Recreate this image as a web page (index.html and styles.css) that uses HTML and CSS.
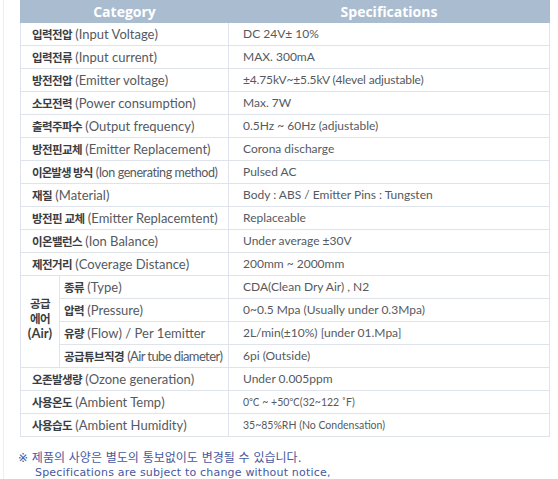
FILE: index.html
```html
<!DOCTYPE html>
<html lang="ko">
<head>
<meta charset="utf-8">
<title>Specifications</title>
<link rel="stylesheet" href="styles.css">
</head>
<body>
<div class="page">
  <table class="spec">
    <colgroup>
      <col class="c-air">
      <col class="c-cat">
      <col class="c-val">
    </colgroup>
    <thead>
      <tr><th colspan="2">Category</th><th>Specifications</th></tr>
    </thead>
    <tbody>
      <tr><td colspan="2" class="cat"><b>입력전압</b> (Input Voltage)</td><td class="val">DC 24V± 10%</td></tr>
      <tr><td colspan="2" class="cat"><b>입력전류</b> (Input current)</td><td class="val">MAX. 300mA</td></tr>
      <tr><td colspan="2" class="cat"><b>방전전압</b> (Emitter voltage)</td><td class="val narrow">±4.75kV~±5.5kV (4level adjustable)</td></tr>
      <tr><td colspan="2" class="cat"><b>소모전력</b> (Power consumption)</td><td class="val">Max. 7W</td></tr>
      <tr><td colspan="2" class="cat"><b>출력주파수</b> (Output frequency)</td><td class="val">0.5Hz ~ 60Hz (adjustable)</td></tr>
      <tr><td colspan="2" class="cat"><b>방전핀교체</b> (Emitter Replacement)</td><td class="val">Corona discharge</td></tr>
      <tr><td colspan="2" class="cat"><b class="bt">이온발생 방식</b> <span class="tighter">(Ion generating method)</span></td><td class="val">Pulsed AC</td></tr>
      <tr><td colspan="2" class="cat"><b>재질</b> (Material)</td><td class="val">Body : ABS / Emitter Pins : Tungsten</td></tr>
      <tr><td colspan="2" class="cat"><b>방전핀 교체</b> (Emitter Replacemtent)</td><td class="val">Replaceable</td></tr>
      <tr><td colspan="2" class="cat"><b>이온밸런스</b> (Ion Balance)</td><td class="val">Under average ±30V</td></tr>
      <tr><td colspan="2" class="cat"><b>제전거리</b> (Coverage Distance)</td><td class="val">200mm ~ 2000mm</td></tr>
      <tr><td rowspan="4" class="air"><b>공급<br>에어</b><br><span class="air-en">(Air)</span></td><td class="cat sub"><b>종류</b> (Type)</td><td class="val">CDA(Clean Dry Air) , N2</td></tr>
      <tr><td class="cat sub"><b>압력</b> (Pressure)</td><td class="val">0~0.5 Mpa (Usually under 0.3Mpa)</td></tr>
      <tr><td class="cat sub"><b>유량</b> (Flow) / Per 1emitter</td><td class="val">2L/min(±10%) [under 01.Mpa]</td></tr>
      <tr><td class="cat sub"><b>공급튜브직경</b> <span class="tight">(Air tube diameter)</span></td><td class="val">6pi (Outside)</td></tr>
      <tr><td colspan="2" class="cat"><b>오존발생량</b> (Ozone generation)</td><td class="val">Under 0.005ppm</td></tr>
      <tr><td colspan="2" class="cat"><b>사용온도</b> (Ambient Temp)</td><td class="val small">0℃ ~ +50℃(32~122 ˚F)</td></tr>
      <tr><td colspan="2" class="cat"><b>사용습도</b> (Ambient Humidity)</td><td class="val small">35~85%RH (No Condensation)</td></tr>
    </tbody>
  </table>
  <p class="note"><span class="ko">※ 제품의 사양은 별도의 통보없이도 변경될 수 있습니다.</span><br><span class="en">Specifications are subject to change without notice,</span></p>
</div>
</body>
</html>
```
FILE: styles.css
```css
html, body {
  margin: 0;
  padding: 0;
  background: #ffffff;
}
.page {
  margin-left: 3px;
  border-left: 1px solid #eceef2;
  padding-left: 16px;
  min-height: 479px;
  box-sizing: border-box;
}
.spec {
  border-collapse: collapse;
  width: 529px;
  table-layout: fixed;
  font-family: Lato, "Noto Sans CJK KR", sans-serif;
  font-size: 12px;
  color: #555a60;
}
.c-air { width: 39px; }
.c-cat { width: 169px; }
.c-val { width: 321px; }
.spec th {
  background: #a9bcd0;
  color: #ffffff;
  font-family: "Open Sans", "Noto Sans CJK KR", sans-serif;
  font-weight: bold;
  font-size: 14px;
  height: 22px;
  padding: 0;
  text-align: center;
  border: 1px solid #a9bcd0;
  border-top: 0;
}
.spec td {
  height: 22px;
  padding: 0 0 0 11px;
  border: 1px solid #dfe4ec;
  white-space: nowrap;
  line-height: 14px;
}
.spec td.cat {
  font-size: 13px;
}
.spec td.val {
  padding-left: 14px;
}
.spec b {
  font-family: "Noto Sans CJK KR", sans-serif;
  font-weight: bold;
  font-size: 11.5px;
  letter-spacing: -0.6px;
  color: #3a3d42;
}
.spec b.bt {
  letter-spacing: -0.9px;
}
.spec td.sub {
  padding-left: 4px;
}
.spec td.air {
  padding: 0 0 6px;
  text-align: center;
  line-height: 14px;
}
.air-en {
  font-size: 13px;
  font-weight: bold;
  color: #3a3d42;
}
.tight {
  letter-spacing: -0.6px;
}
.tighter {
  font-size: 12.5px;
  letter-spacing: -0.4px;
}
.val.narrow {
  letter-spacing: -0.15px;
}
.val.small {
  font-size: 10.5px;
}
.note {
  margin: 14px 0 0 -2px;
  font-family: "DejaVu Sans", "Noto Sans CJK KR", sans-serif;
  font-size: 11px;
  line-height: 14px;
  color: #4658a0;
}
.note .ko {
  font-size: 12px;
}
.note .en {
  display: inline-block;
  padding-left: 17px;
  letter-spacing: 0.2px;
}
```
